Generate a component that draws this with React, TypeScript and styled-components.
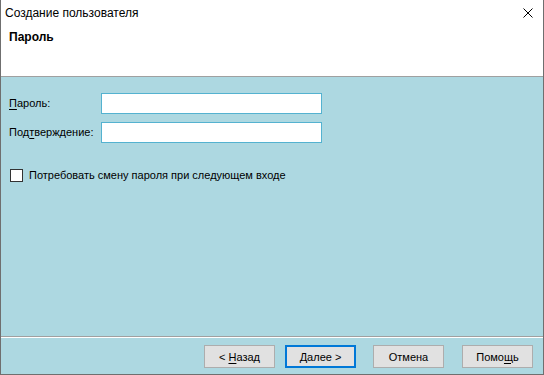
import React from "react";
import styled, { createGlobalStyle } from "styled-components";

const Global = createGlobalStyle`
  html, body { margin: 0; padding: 0; background: #ffffff; }
  body { font-family: "Liberation Sans", Arial, sans-serif; font-size: 11px; color: #000; }
  * { box-sizing: border-box; }
`;

const Window = styled.div`
  width: 544px;
  height: 375px;
  display: flex;
  flex-direction: column;
  border-left: 1px solid #6f6f6f;
  border-right: 1px solid #6f6f6f;
  border-bottom: 1px solid #6f6f6f;
  background: #add8e1;
`;

const TitleBar = styled.div`
  height: 27px;
  flex: none;
  display: flex;
  align-items: center;
  justify-content: space-between;
  background: #ffffff;
  padding: 0 10px 1px 4px;
`;

const Title = styled.span`
  font-size: 12px;
  line-height: 16px;
`;

const CloseIcon = styled.svg`
  width: 10px;
  height: 10px;
  display: block;
`;

const Header = styled.div`
  height: 50px;
  flex: none;
  background: #ffffff;
  padding: 2px 8px 0;
  border-bottom: 1px solid #a0a0a0;
`;

const HeaderTitle = styled.div`
  font-weight: bold;
  font-size: 12px;
  line-height: 16px;
`;

const Body = styled.div`
  flex: 1;
  padding: 16px 7px 0 7px;
  display: flex;
  flex-direction: column;
`;

const FormGrid = styled.div`
  display: grid;
  grid-template-columns: 93px 221px;
  row-gap: 8px;
  align-items: center;
`;

const Label = styled.label`
  font-size: 11px;
  line-height: 15px;
  padding-left: 1px;
  white-space: nowrap;
`;

const Key = styled.span`
  text-decoration: underline;
  text-underline-offset: 2px;
`;

const Input = styled.input`
  height: 21px;
  width: 221px;
  border: 1px solid #54b2d0;
  background: #ffffff;
  outline: none;
  padding: 0 3px;
  font: inherit;
`;

const CheckRow = styled.label`
  margin-top: 25px;
  display: flex;
  align-items: center;
  gap: 6px;
  padding-left: 2px;
  font-size: 11px;
  line-height: 15px;
`;

const CheckBox = styled.span`
  width: 13px;
  height: 13px;
  border: 1px solid #333333;
  background: #ffffff;
  flex: none;
`;

const Footer = styled.div`
  flex: none;
  height: 38px;
  border-top: 1px solid #a0a0a0;
  box-shadow: inset 0 1px 0 #ffffff;
  display: flex;
  justify-content: flex-end;
  align-items: flex-start;
  padding: 8px 10px 0 0;
`;

const ButtonGroup = styled.div<{ $gap: number }>`
  display: flex;
  gap: ${(p) => p.$gap}px;
  margin-left: 17px;
`;

const Button = styled.button<{ $default?: boolean }>`
  width: 71px;
  height: 23px;
  font-family: inherit;
  font-size: 11px;
  color: #000;
  background: #e1e1e1;
  border: ${(p) => (p.$default ? "2px solid #0078d7" : "1px solid #adadad")};
  padding: 0;
  display: flex;
  align-items: center;
  justify-content: center;
`;

export default function App() {
  return (
    <>
      <Global />
      <Window>
        <TitleBar>
          <Title>Создание пользователя</Title>
          <CloseIcon viewBox="0 0 10 10">
            <path d="M0.5 0.5 L9.5 9.5 M9.5 0.5 L0.5 9.5" stroke="#000" strokeWidth="1" />
          </CloseIcon>
        </TitleBar>
        <Header>
          <HeaderTitle>Пароль</HeaderTitle>
        </Header>
        <Body>
          <FormGrid>
            <Label>
              <Key>П</Key>ароль:
            </Label>
            <Input type="password" />
            <Label>
              Под<Key>т</Key>верждение:
            </Label>
            <Input type="password" />
          </FormGrid>
          <CheckRow>
            <CheckBox />
            Потребовать смену пароля при следующем входе
          </CheckRow>
        </Body>
        <Footer>
          <ButtonGroup $gap={10}>
            <Button>
              &lt;&nbsp;<Key>Н</Key>азад
            </Button>
            <Button $default>
              <Key>Д</Key>алее &gt;
            </Button>
          </ButtonGroup>
          <ButtonGroup $gap={18}>
            <Button>Отмена</Button>
            <Button>
              Помо<Key>щ</Key>ь
            </Button>
          </ButtonGroup>
        </Footer>
      </Window>
    </>
  );
}
